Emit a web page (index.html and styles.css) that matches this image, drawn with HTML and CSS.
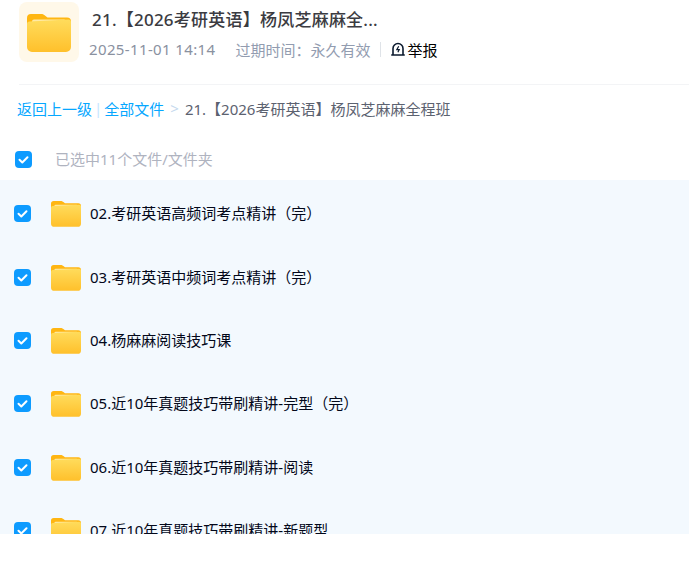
FILE: index.html
```html
<!DOCTYPE html>
<html lang="zh-CN">
<head>
  <meta charset="UTF-8" />
  <meta name="viewport" content="width=device-width, initial-scale=1.0" />
  <title>21.【2026考研英语】杨凤芝麻麻全程班</title>
  <link rel="stylesheet" href="styles.css">
</head>
<body>
  <svg class="defs" width="0" height="0" aria-hidden="true">
    <defs>
      <linearGradient id="folderFront" x1="0" y1="0" x2="0" y2="1">
        <stop offset="0" stop-color="#ffdc5c" />
        <stop offset="1" stop-color="#ffc02b" />
      </linearGradient>
      <symbol id="folder" viewBox="0 0 44 39">
        <path d="M0 5a4 4 0 0 1 4-4h10c2 0 3 .6 4.200 1.800L20.500 4.500H40a4 4 0 0 1 4 4V20H0z" fill="#ffb612" />
        <rect x="5" y="6.500" width="34" height="8" rx="2" fill="#ffeaa6" />
        <path d="M0 11a2.500 2.500 0 0 1 2.500-2.500L41.500 6.500A2.500 2.500 0 0 1 44 9v25a5 5 0 0 1-5 5H5a5 5 0 0 1-5-5z" fill="url(#folderFront)" />
      </symbol>
      <symbol id="check" viewBox="0 0 17 17">
        <rect width="17" height="17" rx="4" fill="#0d9bff" />
        <path d="M4.500 8.800l2.800 2.700 5.200-5.300" fill="none" stroke="#fff" stroke-width="2" stroke-linecap="round" stroke-linejoin="round" />
      </symbol>
    </defs>
  </svg>

  <div class="page">
    <header class="share-head">
      <div class="share-icon">
        <svg width="44" height="39"><use href="#folder" /></svg>
      </div>
      <div class="share-info">
        <h2 class="share-title">21.【2026考研英语】杨凤芝麻麻全...</h2>
        <div class="share-meta">
          <span class="share-date">2025-11-01 14:14</span>
          <span class="share-expire">过期时间：永久有效</span>
          <span class="share-sep"></span>
          <a class="share-report">
            <svg width="14" height="14" viewBox="0 0 14 14">
              <path d="M.8 13h12.400M2 13V6.500a5 5 0 0 1 10 0V13" fill="none" stroke="#0b1a2e" stroke-width="1.600" stroke-linecap="round" />
              <path d="M7.700 4.200L5.800 7.600h2.400l-1.300 2.600" fill="none" stroke="#0b1a2e" stroke-width="1.200" />
            </svg>
            <span class="report-text">举报</span>
          </a>
        </div>
      </div>
    </header>

    <nav class="crumbs">
      <a>返回上一级</a>
      <span class="crumb-bar">|</span>
      <a>全部文件</a>
      <span class="crumb-arrow">&gt;</span>
      <span class="crumb-current">21.【2026考研英语】杨凤芝麻麻全程班</span>
    </nav>

    <div class="select-all">
      <svg width="17" height="17"><use href="#check" /></svg>
      <span class="select-text">已选中11个文件/文件夹</span>
    </div>

    <ul class="file-list">
      <li class="file-row">
        <svg width="17" height="17"><use href="#check" /></svg>
        <svg class="file-icon" width="30" height="27"><use href="#folder" /></svg>
        <span class="file-name">02.考研英语高频词考点精讲（完）</span>
      </li>
      <li class="file-row">
        <svg width="17" height="17"><use href="#check" /></svg>
        <svg class="file-icon" width="30" height="27"><use href="#folder" /></svg>
        <span class="file-name">03.考研英语中频词考点精讲（完）</span>
      </li>
      <li class="file-row">
        <svg width="17" height="17"><use href="#check" /></svg>
        <svg class="file-icon" width="30" height="27"><use href="#folder" /></svg>
        <span class="file-name">04.杨麻麻阅读技巧课</span>
      </li>
      <li class="file-row">
        <svg width="17" height="17"><use href="#check" /></svg>
        <svg class="file-icon" width="30" height="27"><use href="#folder" /></svg>
        <span class="file-name">05.近10年真题技巧带刷精讲-完型（完）</span>
      </li>
      <li class="file-row">
        <svg width="17" height="17"><use href="#check" /></svg>
        <svg class="file-icon" width="30" height="27"><use href="#folder" /></svg>
        <span class="file-name">06.近10年真题技巧带刷精讲-阅读</span>
      </li>
      <li class="file-row">
        <svg width="17" height="17"><use href="#check" /></svg>
        <svg class="file-icon" width="30" height="27"><use href="#folder" /></svg>
        <span class="file-name">07.近10年真题技巧带刷精讲-新题型</span>
      </li>
    </ul>
  </div>
</body>
</html>
```
FILE: styles.css
```css
html, body {
  margin: 0;
  padding: 0;
  height: 100%;
  overflow: hidden;
  background-color: #fff;
  font-family: "Noto Sans", "Noto Sans CJK SC", sans-serif;
}

.defs {
  display: block;
  height: 0;
}

svg {
  display: block;
  flex-shrink: 0;
}

.page {
  height: 534px;
  overflow: hidden;
  padding-top: 2px;
  box-sizing: border-box;
}

.share-head {
  display: flex;
  height: 83px;
  margin-left: 19px;
  border-bottom: 1px solid #f3f4f6;
  box-sizing: border-box;
}

.share-icon {
  display: flex;
  justify-content: center;
  align-items: center;
  width: 60px;
  height: 60px;
  border-radius: 8px;
  background-color: #fff8e9;
}

.share-info {
  margin-left: 10px;
}

.share-title {
  margin: 6px 0 0 3px;
  font-size: 17px;
  font-weight: 500;
  line-height: 24px;
  letter-spacing: .23px;
  color: #3b3b41;
}

.share-meta {
  display: flex;
  align-items: center;
  height: 22px;
  margin-top: 6px;
  font-size: 15px;
  color: #8a919f;
}

.share-date {
  letter-spacing: .37px;
}

.share-expire {
  margin-left: 20px;
  color: #929cb0;
}

.share-sep {
  width: 1px;
  height: 15px;
  margin: 0 10px;
  background-color: #dfe3e8;
}

.share-report {
  display: flex;
  align-items: center;
  color: #000;
}

.report-text {
  margin-left: 2px;
}

.crumbs {
  display: flex;
  align-items: center;
  height: 22px;
  margin: 12px 0 0 17px;
  font-size: 15px;
  color: #06a7ff;
}

.crumb-bar {
  margin: 0 2px;
  color: #c5e6ff;
}

.crumb-arrow {
  margin: 0 6px;
  color: #c5d9ee;
}

.crumb-current {
  color: #5c6270;
}

.select-all {
  display: flex;
  align-items: center;
  gap: 23px;
  height: 22px;
  margin: 29px 0 0 15px;
  font-size: 15px;
  color: #afb3bf;
}

.select-text {
  margin-bottom: 2px;
}

.file-list {
  list-style: none;
  height: 354px;
  margin: 10px 0 0;
  padding: 2px 0 0;
  box-sizing: border-box;
  overflow: hidden;
  background-color: #f3f9fe;
}

.file-row {
  display: flex;
  align-items: center;
  height: 63.400px;
  padding-left: 14px;
}

.file-icon {
  margin-left: 20px;
}

.file-name {
  margin-left: 9px;
  margin-bottom: 2px;
  font-size: 15px;
  color: #03081a;
}
```
